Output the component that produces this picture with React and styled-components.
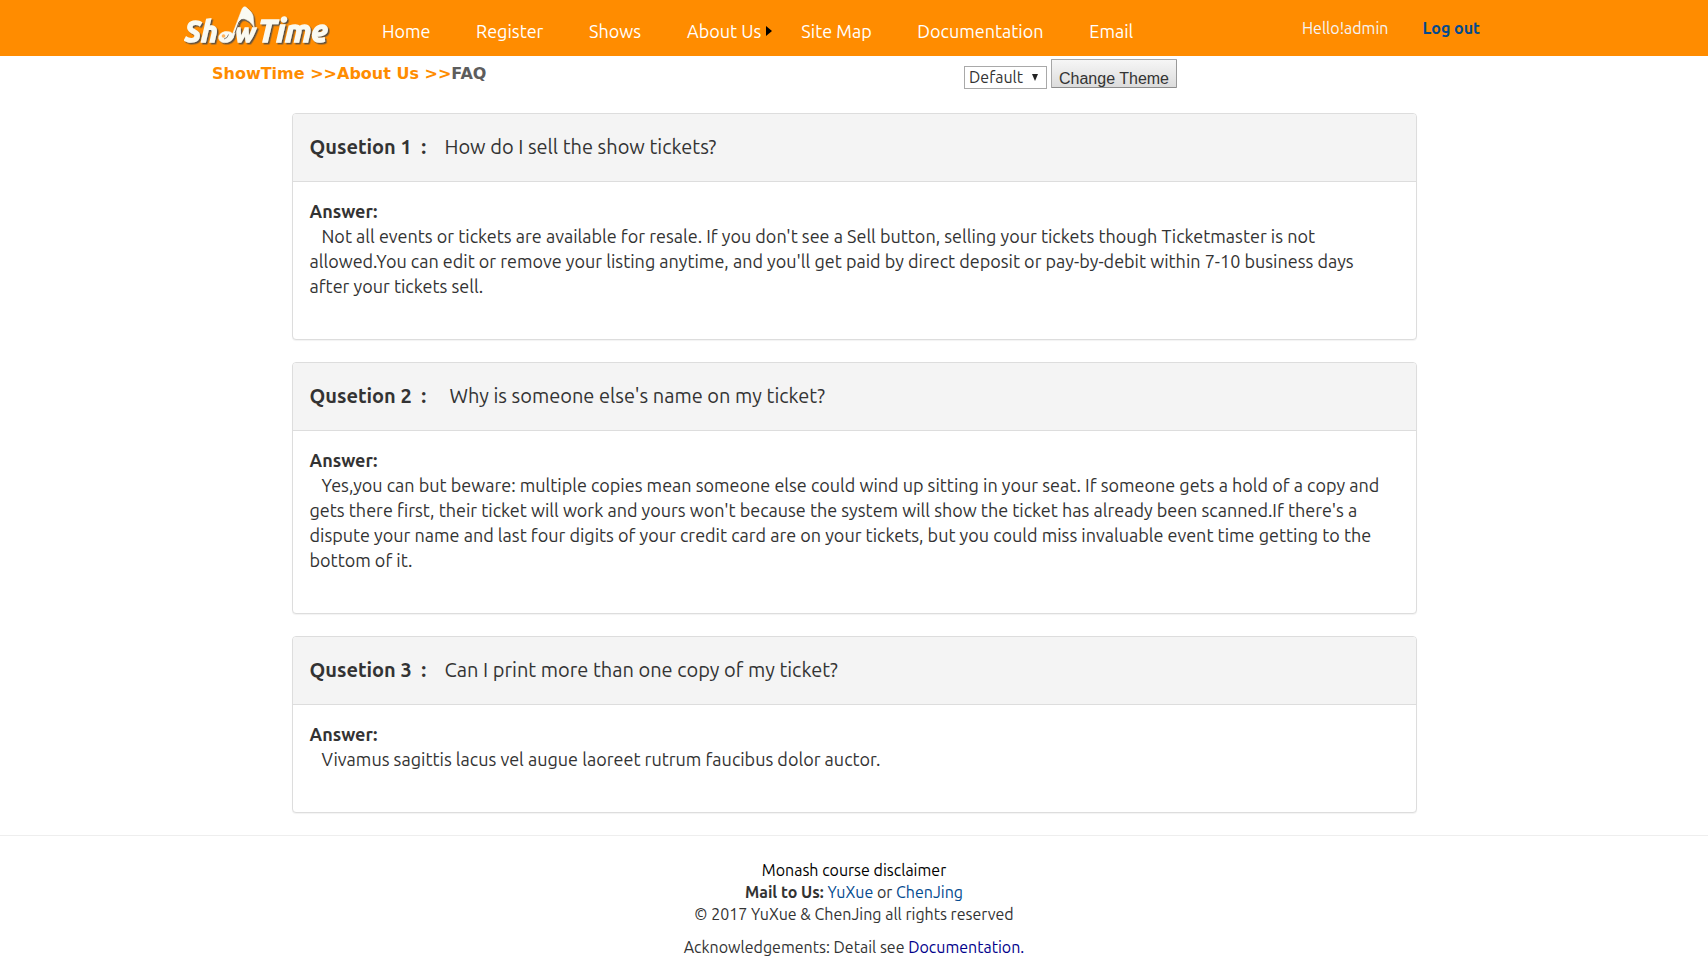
import React from 'react';
import styled, { createGlobalStyle, css } from 'styled-components';

const GlobalStyle = createGlobalStyle`
  *, *::before, *::after { box-sizing: border-box; }
  body {
    margin: 0;
    background: #fff;
    color: #333;
    font-family: Ubuntu, "Noto Sans", "Open Sans", sans-serif;
    font-size: 18px;
    line-height: 25px;
  }
  a { color: inherit; text-decoration: none; }
`;

const bar = css`
  max-width: 1340px;
  margin: 0 auto;
  display: flex;
`;

const Header = styled.header`
  background: #ff8c00;
`;

const HeaderInner = styled.div`
  ${bar}
  min-height: 56px;
  align-items: center;
`;

const LogoLink = styled.a`
  display: block;
  width: 150px;
  height: 56px;
`;

const LogoArt = styled.svg`
  display: block;
  width: 150px;
  height: 56px;
  font-family: Ubuntu, Lato, sans-serif;
  font-weight: 700;
  font-style: italic;
`;

const Nav = styled.nav`
  display: flex;
  gap: 45px;
  margin-left: 48px;
  padding-top: 6px;
  color: #fff;
`;

const NavItem = styled.a`
  display: flex;
  align-items: center;
  gap: 5px;
  min-width: ${(p) => p.$width}px;
  margin-right: ${(p) => (p.$submenu ? -16 : 0)}px;

  &::after {
    content: ${(p) => (p.$submenu ? "''" : 'none')};
    border: 5px solid transparent;
    border-left: 6px solid #000;
    border-right: 0;
  }
`;

const Account = styled.div`
  display: flex;
  gap: 34px;
  margin-left: auto;
  margin-right: 44px;
  font-size: 16px;
  color: #f4f4f4;
`;

const LogOut = styled.a`
  color: #034a8f;
  font-weight: 700;
`;

const SubBar = styled.div`
  ${bar}
  min-height: 57px;
  padding: 3px 347px 0 28px;
  justify-content: space-between;
  align-items: flex-start;
`;

const Breadcrumb = styled.nav`
  padding-top: 2px;
  font-family: Verdana, "DejaVu Sans", sans-serif;
  font-size: 16px;
  font-weight: 700;
  color: #ff8c00;
`;

const Current = styled.span`
  color: #5d5d5d;
`;

const ThemeForm = styled.form`
  display: flex;
  align-items: flex-end;
  gap: 4px;
`;

const SelectBox = styled.div`
  position: relative;

  &::after {
    content: '';
    position: absolute;
    right: 9px;
    top: 8px;
    border: 3px solid transparent;
    border-top: 7px solid #222;
    border-bottom: 0;
    pointer-events: none;
  }
`;

const ThemeSelect = styled.select`
  display: block;
  appearance: none;
  width: 83px;
  height: 23px;
  margin-bottom: -1px;
  padding: 0 4px;
  border: 1px solid #a9a9a9;
  border-radius: 0;
  background: #fff;
  color: #333;
  font-family: inherit;
  font-size: 16px;
  line-height: 21px;
`;

const ThemeButton = styled.button`
  width: 126px;
  height: 29px;
  padding: 11px 0 0;
  overflow: hidden;
  border: 1px solid;
  border-color: #a6a6a6 #999 #8c8c8c #a6a6a6;
  border-radius: 1px;
  background: linear-gradient(#f6f6f6, #dcdcdc);
  color: #333;
  font-family: Arial, "Liberation Sans", sans-serif;
  font-size: 16px;
  line-height: 16px;
`;

const Faq = styled.main`
  max-width: 1125px;
  margin: 0 auto;
  display: grid;
  gap: 22px;
`;

const Panel = styled.section`
  border: 1px solid #ddd;
  border-radius: 4px;
  box-shadow: 0 1px 1px rgba(0, 0, 0, 0.05);
  background: #fff;
`;

const PanelHeading = styled.h2`
  margin: 0;
  padding: 20px 17px 22px;
  border-bottom: 1px solid #ddd;
  border-radius: 3px 3px 0 0;
  background: #f4f4f4;
  font-size: 20px;
  font-weight: 400;
  line-height: 25px;
  display: flex;
  align-items: baseline;
`;

const Number = styled.strong`
  width: 135px;
`;

const Question = styled.span`
  padding-left: ${(p) => (p.$indented ? 5 : 0)}px;
`;

const PanelBody = styled.div`
  padding: 17px 24px 40px 17px;
`;

const Answer = styled.p`
  margin: 0;
  text-indent: 12px;
`;

const Footer = styled.footer`
  margin-top: 22px;
  padding: 23px 16px 8px;
  border-top: 1px solid #eee;
  font-size: 16px;
  line-height: 22px;
  text-align: center;
`;

const FooterLine = styled.p`
  margin: 0;
  padding-top: ${(p) => (p.$spaced ? 11 : 0)}px;
`;

const FooterLink = styled.a`
  color: ${(p) => p.$color};
`;

const links = [
  { label: 'Home', width: 49 },
  { label: 'Register', width: 68 },
  { label: 'Shows', width: 53 },
  { label: 'About Us', width: 85, submenu: true },
  { label: 'Site Map', width: 71 },
  { label: 'Documentation', width: 127 },
  { label: 'Email', width: 45 },
];

const questions = [
  {
    title: 'How do I sell the show tickets?',
    answer:
      "Not all events or tickets are available for resale. If you don't see a Sell button, selling your tickets though Ticketmaster is not allowed.You can edit or remove your listing anytime, and you'll get paid by direct deposit or pay-by-debit within 7-10 business days after your tickets sell.",
  },
  {
    title: "Why is someone else's name on my ticket?",
    indented: true,
    answer:
      "Yes,you can but beware: multiple copies mean someone else could wind up sitting in your seat. If someone gets a hold of a copy and gets there first, their ticket will work and yours won't because the system will show the ticket has already been scanned.If there's a dispute your name and last four digits of your credit card are on your tickets, but you could miss invaluable event time getting to the bottom of it.",
  },
  {
    title: 'Can I print more than one copy of my ticket?',
    answer: 'Vivamus sagittis lacus vel augue laoreet rutrum faucibus dolor auctor.',
  },
];

function Logo() {
  return (
    <LogoArt viewBox="0 0 150 56" role="img" aria-label="ShowTime">
      <defs>
        <filter id="logo-shadow" x="-10%" y="-10%" width="120%" height="130%">
          <feDropShadow dx="1.5" dy="1.5" stdDeviation="0.7" floodColor="#4a4a4a" floodOpacity="0.9" />
        </filter>
      </defs>
      <g filter="url(#logo-shadow)" fill="#fafaf2" stroke="#fafaf2" strokeWidth="1.4">
        <text x="1" y="42" fontSize="29">Sh</text>
        <text x="51" y="42" fontSize="25">w</text>
        <text x="74" y="42" fontSize="31">Time</text>
        <g strokeWidth="0.5">
          <ellipse cx="42" cy="37" rx="7.500" ry="5.500" transform="rotate(-12 42 37)" />
          <path d="M47 38 L58 9 Q60 5 63 8 Q68 12 69 16 L70 27 Q66 20 61 19 Q57 18 55 22 L49 38 Z" />
        </g>
      </g>
      <path d="M51 33 L55 22 Q57 18 61 20 Q66 22 69 27" fill="none" stroke="#6b6258" strokeWidth="1" />
      <circle cx="39.500" cy="36" r="1.800" fill="#ffb45c" />
      <path d="M40 39 Q44 38 44.500 34.500" fill="none" stroke="#6b6258" strokeWidth="0.8" />
    </LogoArt>
  );
}

export default function App() {
  return (
    <>
      <GlobalStyle />
      <Header>
        <HeaderInner>
          <LogoLink href="#home"><Logo /></LogoLink>
          <Nav aria-label="Main">
            {links.map(({ label, width, submenu }) => (
              <NavItem key={label} href="#" $width={width} $submenu={submenu}>{label}</NavItem>
            ))}
          </Nav>
          <Account>
            <span>Hello!admin</span>
            <LogOut href="#logout">Log out</LogOut>
          </Account>
        </HeaderInner>
      </Header>
      <SubBar>
        <Breadcrumb aria-label="Breadcrumb">
          <a href="#home">ShowTime</a> &gt;&gt;<a href="#about">About Us</a> &gt;&gt;<Current>FAQ</Current>
        </Breadcrumb>
        <ThemeForm onSubmit={(e) => e.preventDefault()}>
          <SelectBox>
            <ThemeSelect aria-label="Theme" defaultValue="Default">
              <option>Default</option>
            </ThemeSelect>
          </SelectBox>
          <ThemeButton type="submit">Change Theme</ThemeButton>
        </ThemeForm>
      </SubBar>
      <Faq>
        {questions.map(({ title, answer, indented }, i) => (
          <Panel key={title}>
            <PanelHeading>
              <Number>Qusetion {i + 1}&nbsp; :</Number>
              <Question $indented={indented}>{title}</Question>
            </PanelHeading>
            <PanelBody>
              <strong>Answer:</strong>
              <Answer>{answer}</Answer>
            </PanelBody>
          </Panel>
        ))}
      </Faq>
      <Footer>
        <FooterLine><FooterLink href="#disclaimer" $color="#000">Monash course disclaimer</FooterLink></FooterLine>
        <FooterLine>
          <strong>Mail to Us:</strong> <FooterLink href="#yuxue" $color="#034a8f">YuXue</FooterLink> or{' '}
          <FooterLink href="#chenjing" $color="#034a8f">ChenJing</FooterLink>
        </FooterLine>
        <FooterLine>© 2017 YuXue &amp; ChenJing all rights reserved</FooterLine>
        <FooterLine $spaced>
          Acknowledgements: Detail see <FooterLink href="#documentation" $color="#00008b">Documentation.</FooterLink>
        </FooterLine>
      </Footer>
    </>
  );
}
